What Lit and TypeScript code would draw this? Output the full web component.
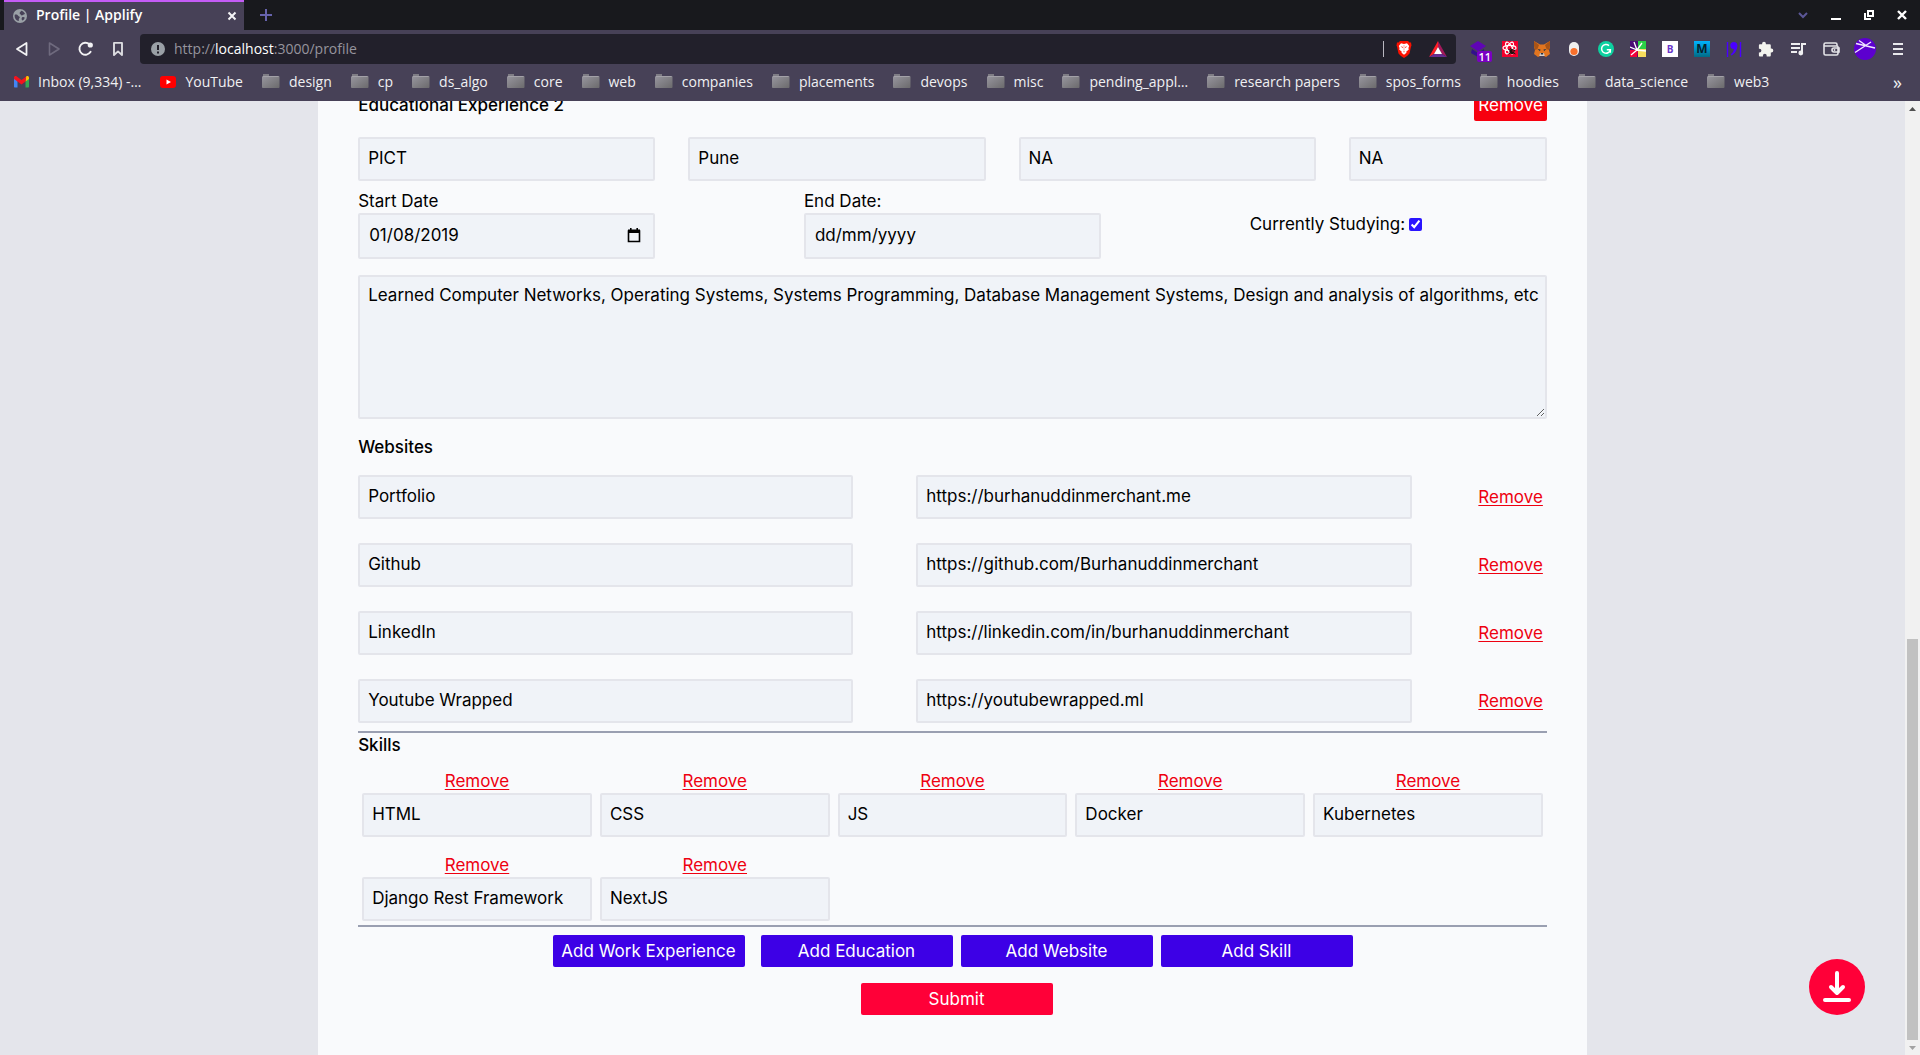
import { LitElement, html, css, svg, nothing } from "lit";
import { customElement } from "lit/decorators.js";

/* ---------- icons ---------- */

const icon = (w: number, h: number, body: unknown) =>
  html`<svg width=${w} height=${h} viewBox="0 0 ${w} ${h}" fill="none" aria-hidden="true">${body}</svg>`;

const globe = icon(14, 14, svg`
  <circle cx="7" cy="7" r="7" fill="#9aa0a6"/>
  <path d="M2 5.500c1.600-.2 2.600.3 3.200 1.200.5.8 1.600.6 1.600 1.600 0 .9-1 1-1 2v1.700C3.200 11.600 1.600 9.600 1.600 7c0-.5.1-1 .4-1.500zM8 1.700c1.800.3 3.200 1.400 4 3-.6.9-1.700.5-2.200 1.300-.5.700-1.700.5-2-.3-.2-.8-1.300-.7-1.200-1.700.1-.9 1.300-.9 1.400-2.300zM9.200 8.200c1-.4 2-.2 2.600.6-.4 1.200-1.200 2.200-2.300 2.800-.9-.6-1.300-2.700-.3-3.400z" fill="#474157"/>`);

const tabClose = icon(10, 10, svg`<path d="M1.500 1.500l7 7M8.500 1.500l-7 7" stroke="#f4f4f6" stroke-width="2"/>`);
const plus = icon(12, 12, svg`<path d="M6 0v12M0 6h12" stroke="#6663ad" stroke-width="2"/>`);
const chevron = icon(12, 8, svg`<path d="M2 2l4 4 4-4" stroke="#5b5797" stroke-width="2"/>`);
const minimize = icon(10, 10, svg`<path d="M0 9h10" stroke="#fff" stroke-width="2"/>`);
const restore = icon(10, 10, svg`<path d="M4 1h5v5H4z" stroke="#fff" stroke-width="2"/><path d="M1 3v6h6" stroke="#fff" stroke-width="2"/>`);
const winClose = icon(12, 12, svg`<path d="M2 2l8 8M10 2l-8 8" stroke="#fff" stroke-width="2.400"/>`);

const back = icon(14, 16, svg`<path d="M11.500 2v12L2 8z" stroke="#f2f2f4" stroke-width="1.800" stroke-linejoin="round"/>`);
const forward = icon(14, 16, svg`<path d="M2.500 2v12L12 8z" stroke="#6f6a7e" stroke-width="1.600" stroke-linejoin="round"/>`);
const reload = icon(16, 16, svg`<path d="M12.600 10.800A6 6 0 1 1 11.500 3.300" stroke="#f2f2f4" stroke-width="1.900" stroke-linecap="round"/><circle cx="12.300" cy="4" r="2.600" fill="#f2f2f4"/>`);
const bookmark = icon(12, 16, svg`<path d="M2 1.900h8V14l-4-3.600L2 14z" stroke="#dcdce0" stroke-width="1.900" stroke-linejoin="round"/>`);
const info = icon(14, 14, svg`<circle cx="7" cy="7" r="7" fill="#9aa0a6"/><path d="M7 3v5M7 9.400v2" stroke="#22202b" stroke-width="2"/>`);

const brave = icon(16, 18, svg`
  <path d="M4 1h8l1.500 1.500L15 2.500l.5 3-.6 1.500-1.400 6.500L11 16l-3 2-3-2-2.500-2.500L1.100 7 .5 5.500l.5-3 1.500 0z" fill="#fb1100"/>
  <path d="M5 3.300l3 .6 3-.6 2.200 2.600-.8 2.100.4 1.400-2.600 2.300.3 1L8 14.700l-2.500-2 .3-1-2.600-2.300.4-1.400-.8-2.100z" fill="#fff"/>
  <path d="M4.600 6.300l2.400.7-.4 1zM11.400 6.300L9 7l.4 1zM7 11.500h2L8 12.600z" fill="#fb1100"/>
  <path d="M8 5v5.500" stroke="#f7a9a2" stroke-width="1"/>`);
const bat = icon(18, 16, svg`
  <path d="M9 0L0 16l5-3 4-7z" fill="#ff1d25"/>
  <path d="M9 0l9 16-5-3-4-7z" fill="#a3195b"/>
  <path d="M0 16h18l-5-3H5z" fill="#662d91"/>
  <path d="M9 6l-4 7h8z" fill="#fff"/>`);
const layers = icon(16, 16, svg`
  <path d="M8 0l8 5-8 5.500L0 5z" fill="#5f05b5"/>
  <path d="M2 8l6 4 6-4v4l-6 4-7-4z" fill="#31108a"/>`);
const cookie = icon(16, 16, svg`
  <path d="M0 0h16v16H0z" fill="#f3002d"/>
  <g stroke="#fff" stroke-width="1.200"><ellipse cx="7.500" cy="7" rx="6.500" ry="2.600"/><ellipse cx="7.500" cy="7" rx="6.500" ry="2.600" transform="rotate(60 7.500 7)"/><ellipse cx="7.500" cy="7" rx="6.500" ry="2.600" transform="rotate(120 7.500 7)"/></g>
  <circle cx="10" cy="10.500" r="2.600" fill="#24100f"/><path d="M6.500 8.500l2 1M13.500 9l-2 1M6.500 13l2-1M13.500 13l-2-1M8.500 7l1 2" stroke="#24100f"/>
  <circle cx="11" cy="10" r=".7" fill="#f3002d"/>`);
const fox = icon(16, 16, svg`
  <path d="M0 0l6 3.500h4L16 0v6l-1 3 1 4-4 3-2-1H6l-2 1-4-3 1-4L0 6z" fill="#e2751f"/>
  <path d="M0 0l5 4-1.500 4L1 9 0 5zM16 0l-5 4 1.500 4L15 9l1-4z" fill="#a95416"/>
  <path d="M6 12h4l.7 3H5.300z" fill="#d8cfc7"/><path d="M3.500 8l3 .5-.5 1.800zM12.500 8l-3 .5.5 1.800zM6.800 12h2.400v1.600H6.800z" fill="#233447"/>`);
const pill = icon(10, 14, svg`<rect width="10" height="14" rx="5" fill="#efefef"/><circle cx="5" cy="9.500" r="3.600" fill="#f8702c"/>`);
const grammar = icon(16, 16, svg`<circle cx="8" cy="8" r="8" fill="#0dd1a0"/><path d="M11 4.600A4.400 4.400 0 1 0 12.300 8.800H8.800M12.300 8.800v3" stroke="#fff" stroke-width="1.500"/>`);
const burst = icon(16, 16, svg`
  <path d="M0 0h9v16H0z" fill="#4b0a74"/><path d="M8 0h8v8H8z" fill="#2bd246"/><path d="M8 8h8v8H8z" fill="#f7dd5b"/><path d="M0 9l8 0-1 7H0z" fill="#f1033a"/>
  <path d="M7 9L4 1M7 9L0 6M7 9L1 14M7 9l9 1M7 9l5-7" stroke="#fff" stroke-width="1.300"/>`);
const quote = icon(16, 16, svg`
  <path d="M1.500 1v15M14.500 1v15" stroke="#4a00ff" stroke-width="1.400"/>
  <circle cx="7.800" cy="4.500" r="3.500" fill="#4a00ff"/>
  <path d="M11.300 4.500C11.300 9 9 12.500 5.500 14.500L4.800 13.300C7 11.500 8 9.500 8 7z" fill="#4a00ff"/>`);
const puzzle = icon(16, 16, svg`<path d="M6 .8a1.900 1.900 0 0 1 1.900 1.900V3.300h3.600c.8 0 1.300.5 1.300 1.300v3h.6a1.900 1.900 0 0 1 0 3.800h-.6v2.800c0 .8-.5 1.300-1.300 1.300H8.700v-.8a1.900 1.900 0 0 0-3.800 0v.8H2.200c-.8 0-1.300-.5-1.300-1.300v-2.700h.6a1.900 1.900 0 0 0 0-3.800H.9V4.600c0-.8.5-1.300 1.300-1.300h1.900v-.6A1.900 1.900 0 0 1 6 .8z" fill="#f3f3ee"/>`);
const music = icon(17, 16, svg`<path d="M1 3h9M1 7h9M1 11h6" stroke="#eeeef0" stroke-width="2"/><path d="M12 12V3h4" stroke="#eeeef0" stroke-width="2"/><circle cx="10.800" cy="12" r="2.400" fill="#eeeef0"/>`);
const wallet = icon(17, 14, svg`<path d="M14 4V2.500C14 1.500 13.500 1 12.500 1H2.500C1.500 1 1 1.500 1 2.500v9C1 12.500 1.500 13 2.500 13h11c1 0 1.500-.5 1.500-1.500V5c0-.7-.4-1-1-1H1M16 6h-5a2 2 0 0 0 0 4h5z" stroke="#e4e3e8" stroke-width="1.600"/><circle cx="11.500" cy="8" r=".9" fill="#e4e3e8"/>`);
const avatar = icon(22, 22, svg`<circle cx="11" cy="11" r="11" fill="#5c00cf"/><path d="M2 5.500l19 4.500M1 14.500L17 4M5 2.500l7 5" stroke="#f0e6ff" stroke-width="1.400"/>`);
const menu = icon(10, 12, svg`<path d="M0 1h10M0 6h10M0 11h10" stroke="#e8e8ec" stroke-width="2"/>`);

const folder = icon(18, 15, svg`
  <defs><linearGradient id="f" x1="0" y1="0" x2="1" y2="1"><stop offset="0" stop-color="#98969f"/><stop offset="1" stop-color="#6b6a6c"/></linearGradient></defs>
  <path d="M1 0h6v3H1z" fill="#7f7d85"/><path d="M0 3.500C0 3 .5 2 1 2h15.500c.5 0 1 .5 1 1v10c0 .5-.5 1-1 1H1c-.5 0-1-.5-1-1z" fill="url(#f)"/>
  <path d="M1 2.500h15.500" stroke="#a3a1a8"/>`);
const gmail = icon(15, 12, svg`
  <path d="M0 1.500v9c0 .6.400 1 1 1h2.500V4z" fill="#4285f4"/><path d="M15 1.500v9c0 .6-.4 1-1 1h-2.500V4z" fill="#34a853"/>
  <path d="M11.500 1.500V5.500L15 3V1.600C15 .2 13.300-.5 12.200.5z" fill="#fbbc04"/>
  <path d="M0 1.600C0 .2 1.700-.5 2.800.5L7.500 4 12.200.5 11.500 5.500l-4 3-4-3L0 3z" fill="#f5121d"/>`);
const youtube = icon(16, 12, svg`<rect width="16" height="12" rx="3" fill="#f00"/><path d="M6.500 3.500v5L11 6z" fill="#fff"/>`);

const calendar = icon(14, 16, svg`<path d="M1.500 4h11v10.500h-11z" stroke="#000" stroke-width="1.600"/><path d="M1 2.500h12V6H1zM3 1h1.600v2H3zM9.400 1H11v2H9.400z" fill="#000"/>`);
const download = icon(28, 34, svg`<path d="M14 3v20M8 17l6 6 6-6M2 30h24" stroke="#fff" stroke-width="4" stroke-linecap="round" stroke-linejoin="round"/>`);

const arrowUp = icon(7, 4, svg`<path d="M0 4l3.500-4L7 4z" fill="#505050"/>`);
const arrowDown = icon(7, 4, svg`<path d="M0 0l3.500 4L7 0z" fill="#a3a3a3"/>`);

/* ---------- browser chrome ---------- */

@customElement("browser-chrome")
class BrowserChrome extends LitElement {
  static styles = css`
    :host { display: block; flex: none; background: #474157; color: #f0f0f2; font-family: "Open Sans", "Noto Sans", sans-serif; font-size: 14px; line-height: 20px; }
    svg { display: block; flex: none; }
    button { all: unset; box-sizing: border-box; display: flex; align-items: center; justify-content: center; }
    .tabs { display: flex; height: 30px; background: #18191d; padding-left: 4px; }
    .tab { display: flex; align-items: center; width: 240px; box-sizing: border-box; padding: 0 7px 0 9px; gap: 9px; background: #474157; border-top: 2px solid #c45cf6; }
    .tab-title { flex: 1; font-weight: 600; color: #fff; padding-bottom: 2px; }
    .new-tab { width: 44px; }
    .window { display: flex; margin-left: auto; padding-right: 2px; }
    .window button { width: 33px; }
    .nav { display: flex; height: 34px; padding: 4px 6px 0 6px; box-sizing: border-box; }
    .ext button { width: 32px; }
    .nav-buttons { display: flex; width: 134px; }
    .nav-buttons button { width: 32px; }
    .address { display: flex; align-items: center; flex: 1; height: 30px; box-sizing: border-box; border-radius: 4px; background: #22202b; padding-left: 11px; gap: 9px; color: #96949d; }
    .address b { font-weight: 400; color: #fff; }
    .address span { flex: 1; }
    .shields { display: flex; align-items: center; height: 16px; border-left: 1px solid #b9b7c0; padding: 0 9px 0 12px; gap: 17px; }
    .ext { display: flex; height: 30px; padding: 0 1px 0 6px; }
    .counted { position: relative; }
    .count { position: absolute; right: 2px; bottom: 2px; padding: 0 1px; border-radius: 2px; background: #7a00c2; color: #fff; font-size: 11px; line-height: 11px; font-weight: 600; }
    .letter { display: grid; place-items: center; width: 16px; height: 16px; font-size: 10px; line-height: 16px; font-weight: 700; }
    .b { background: #fff; color: #6a35c9; }
    .m { background: linear-gradient(#00b3ff, #006b86); color: #06212c; font-size: 12px; }
    .end { display: flex; height: 30px; }
    .end button { width: 33px; }
    .bookmarks { display: flex; align-items: center; height: 37px; padding: 0 18px 2px 14px; box-sizing: border-box; }
    .list { display: flex; gap: 19px; flex: 1; }
    .bookmarks a { display: flex; align-items: center; gap: 9px; color: inherit; text-decoration: none; white-space: nowrap; }
    .more { font-size: 18px; }
  `;
  private folders = ["design", "cp", "ds_algo", "core", "web", "companies", "placements", "devops", "misc", "pending_appl…", "research papers", "spos_forms", "hoodies", "data_science", "web3"];

  private extensions = [
    ["Cookie editor", cookie], ["Wallet fox", fox], ["Pill", pill], ["Writing check", grammar], ["Burst", burst],
    ["B", html`<span class="letter b">B</span>`], ["M", html`<span class="letter m">M</span>`],
    ["Quotes", quote], ["Extensions", puzzle], ["Media", music],
  ] as const;

  render() {
    return html`
      <div class="tabs">
        <div class="tab">${globe}<span class="tab-title">Profile | Applify</span><button aria-label="Close tab">${tabClose}</button></div>
        <button class="new-tab" aria-label="New tab">${plus}</button>
        <div class="window">
          <button aria-label="Search tabs">${chevron}</button>
          <button aria-label="Minimize">${minimize}</button>
          <button aria-label="Restore">${restore}</button>
          <button aria-label="Close">${winClose}</button>
        </div>
      </div>
      <div class="nav">
        <div class="nav-buttons">
          <button aria-label="Back">${back}</button><button aria-label="Forward">${forward}</button>
          <button aria-label="Reload">${reload}</button><button aria-label="Bookmark this page">${bookmark}</button>
        </div>
        <div class="address">${info}<span>http://<b>localhost</b>:3000/profile</span>
          <div class="shields">${brave}${bat}</div></div>
        <div class="ext">
          <button class="counted" aria-label="Layers">${layers}<span class="count">11</span></button>
          ${this.extensions.map(([name, glyph]) => html`<button aria-label=${name}>${glyph}</button>`)}
        </div>
        <div class="end">
          <button aria-label="Wallet">${wallet}</button><button aria-label="Account">${avatar}</button><button aria-label="Menu">${menu}</button>
        </div>
      </div>
      <nav class="bookmarks">
        <div class="list">
          <a href="#inbox">${gmail}<span>Inbox (9,334) -…</span></a>
          <a href="#youtube">${youtube}<span>YouTube</span></a>
          ${this.folders.map((f) => html`<a href="#${f}">${folder}<span>${f}</span></a>`)}
        </div>
        <button class="more" aria-label="More bookmarks">»</button>
      </nav>`;
  }
}

/* ---------- profile form ---------- */

@customElement("profile-form")
class ProfileForm extends LitElement {
  static styles = css`
    :host { display: block; box-sizing: border-box; width: 66.6%; min-height: calc(100% + 12px); margin: -12px auto 0; padding: 0 40px 40px; background: #f9fafc; color: #000; font-family: Inter, "Open Sans", sans-serif; font-size: 17px; line-height: 24px; }
    form { display: block; }
    input, textarea, button { font: inherit; color: inherit; box-sizing: border-box; margin: 0; }
    .field { display: block; box-sizing: border-box; width: 100%; height: 44px; padding: 0 8px 2px; border: 2px solid #e4e5eb; border-radius: 2px; background: #f0f3f8; outline: none; }
    .row { display: flex; justify-content: space-between; }
    .title { margin: 0; font-size: 17px; line-height: 24px; font-weight: 500; }
    .head { height: 32px; align-items: center; margin-bottom: 16px; }
    .quarter { width: 25%; }
    .sixth { width: 16.6667%; }
    .dates { margin: 8px 0 16px; align-items: center; }
    .dates label { display: block; }
    .date { display: flex; align-items: center; height: 46px; padding: 0 12px 2px 0; }
    .date input { flex: 1; min-width: 0; height: 100%; border: 0; padding: 0 0 0 9px; background: none; outline: none; }
    .date input::placeholder { color: #000; opacity: 1; }
    .date button { border: 0; padding: 0; background: none; display: flex; }
    .studying { display: flex; align-items: center; gap: 4px; }
    .studying input { width: 13px; height: 13px; accent-color: #2a14ff; }
    textarea.field { height: 144px; padding: 6px 0 8px 8px; resize: both; }
    .websites { margin: 16px 0; }
    .stack { display: grid; gap: 24px; }
    .site { align-items: center; }
    .site .field { width: 41.6667%; }
    .remove { padding: 0 4px; border: 0; background: none; color: #ee0010; text-decoration: underline; text-underline-offset: 2px; text-decoration-thickness: 1px; cursor: pointer; }
    .remove.solid { height: 32px; border-radius: 2px; background: #f7000f; color: #fff; text-decoration: none; }
    hr { height: 2px; margin: 8px 0 0; border: 0; background: #9a9fb1; }
    .skills { display: grid; grid-template-columns: repeat(5, 1fr); row-gap: 16px; padding: 12px 0 4px; }
    .skill { display: flex; flex-direction: column; align-items: center; padding: 0 4px; }
    .skills + hr { margin: 0 0 8px; }
    .actions { display: flex; justify-content: center; gap: 8px; margin-bottom: 16px; }
    .action { width: 192px; height: 32px; padding: 0; border: 0; border-radius: 2px; background: #3d00e6; color: #fff; }
    .actions .action:first-child { margin-right: 8px; }
    .submit { display: block; margin: 0 auto; background: #ff0038; }
    .submit-row { padding-left: 8px; }
  `;
  private sites = [
    ["Portfolio", "https://burhanuddinmerchant.me"],
    ["Github", "https://github.com/Burhanuddinmerchant"],
    ["LinkedIn", "https://linkedin.com/in/burhanuddinmerchant"],
    ["Youtube Wrapped", "https://youtubewrapped.ml"],
  ];
  private skills = ["HTML", "CSS", "JS", "Docker", "Kubernetes", "Django Rest Framework", "NextJS"];

  private date(id: string, label: string, value: string, picker: boolean) {
    return html`<div class="quarter">
      <label for=${id}>${label}</label>
      <div class="field date">
        <input id=${id} type="text" placeholder="dd/mm/yyyy" .value=${value} />
        ${picker ? html`<button type="button" aria-label="Pick a date">${calendar}</button>` : nothing}
      </div>
    </div>`;
  }

  render() {
    return html`<form @submit=${(e: Event) => e.preventDefault()}>
      <div class="row head">
        <h2 class="title">Educational Experience 2</h2>
        <button type="button" class="remove solid">Remove</button>
      </div>
      <div class="row">
        <input class="field quarter" aria-label="Institute" value="PICT" />
        <input class="field quarter" aria-label="City" value="Pune" />
        <input class="field quarter" aria-label="Degree" value="NA" />
        <input class="field sixth" aria-label="Grade" value="NA" />
      </div>
      <div class="row dates">
        ${this.date("start", "Start Date", "01/08/2019", true)}
        ${this.date("end", "End Date:", "", false)}
        <div class="quarter studying"><label for="studying">Currently Studying:</label><input id="studying" type="checkbox" checked /></div>
      </div>
      <textarea class="field" aria-label="Description" .value=${"Learned Computer Networks, Operating Systems, Systems Programming, Database Management Systems, Design and analysis of algorithms, etc"}></textarea>
      <h2 class="title websites">Websites</h2>
      <div class="stack">
        ${this.sites.map(([name, url]) => html`<div class="row site">
          <input class="field" aria-label="Website name" value=${name} />
          <input class="field" aria-label="Website address" value=${url} />
          <button type="button" class="remove">Remove</button>
        </div>`)}
      </div>
      <hr />
      <h2 class="title">Skills</h2>
      <div class="skills">
        ${this.skills.map((s) => html`<div class="skill">
          <button type="button" class="remove">Remove</button>
          <input class="field" aria-label="Skill" value=${s} />
        </div>`)}
      </div>
      <hr />
      <div class="actions">
        ${["Add Work Experience", "Add Education", "Add Website", "Add Skill"].map((a) => html`<button type="button" class="action">${a}</button>`)}
      </div>
      <div class="submit-row"><button class="action submit">Submit</button></div>
    </form>`;
  }
}

@customElement("app-root")
class AppRoot extends LitElement {
  static styles = css`
    :host { display: flex; flex-direction: column; height: 100vh; overflow: hidden; background: #e4e5eb; }
    .view { display: flex; flex: 1; min-height: 0; }
    .page { position: relative; flex: 1; overflow: hidden; }
    .fab { position: absolute; right: 40px; bottom: 40px; width: 56px; height: 56px; padding: 0; border: 0; border-radius: 50%; background: #ff0038; display: grid; place-items: center; }
    .fab svg { display: block; }
    .bar { display: flex; flex-direction: column; align-items: center; width: 15px; background: #f1f1f1; }
    .cap { display: grid; place-items: center; height: 15px; }
    .space { flex: 522; }
    .thumb { flex: 401; width: 11px; background: #c1c1c1; }
  `;
  render() {
    return html`
      <browser-chrome></browser-chrome>
      <div class="view">
        <main class="page">
          <profile-form></profile-form>
          <button class="fab" aria-label="Download resume">${download}</button>
        </main>
        <div class="bar" aria-hidden="true">
          <div class="cap">${arrowUp}</div><div class="space"></div><div class="thumb"></div><div class="cap">${arrowDown}</div>
        </div>
      </div>`;
  }
}
